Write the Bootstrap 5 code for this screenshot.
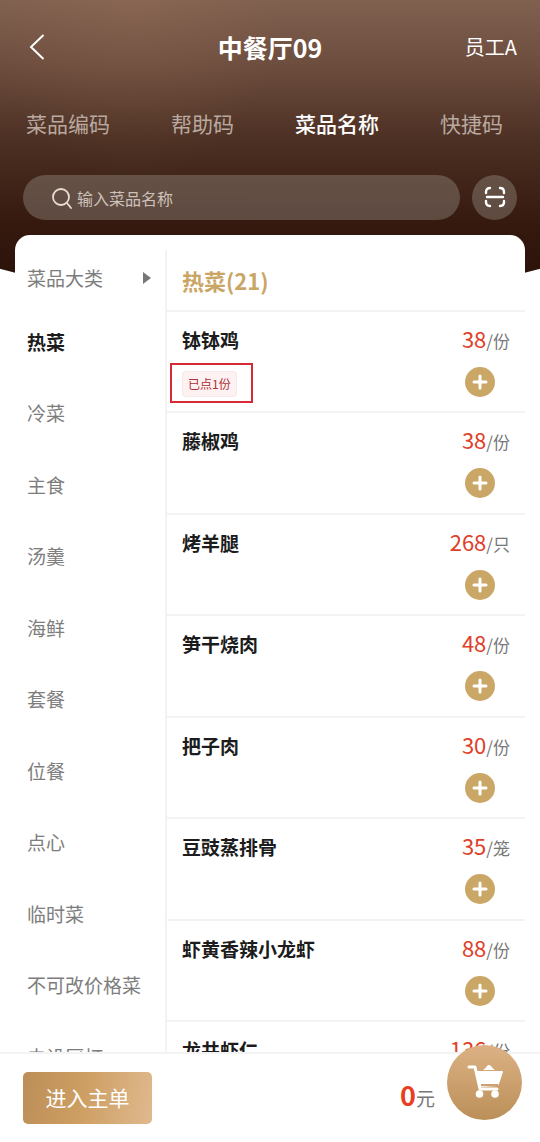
<!DOCTYPE html>
<html lang="zh-CN">
<head>
<meta charset="utf-8">
<meta name="viewport" content="width=device-width, initial-scale=1">
<title>中餐厅09</title>
<link href="https://cdn.jsdelivr.net/npm/bootstrap@5.3.0/dist/css/bootstrap.min.css" rel="stylesheet">
<style>
body{font-family:"Noto Sans CJK SC",sans-serif;color:#1c1c1c;background:#fff}
button,input{font-family:inherit}
.top-area{padding:23px 23px 15px}
.top-area::before{content:"";position:absolute;z-index:-1;top:0;left:-20%;width:140%;height:300px;border-radius:0 0 50% 50%/0 0 104px 104px;
background:radial-gradient(ellipse 150px 180px at 32% 0,rgba(190,140,110,.14),transparent),linear-gradient(#80604f 0,#6d4d3e 65px,#4c3023 140px,#35190f 225px,#2c130a 272px)}
.title-bar{height:48px}
.title-bar h1{font-size:25px;line-height:36px}
.bar-side{flex:1 1 0}
.staff{font-size:20px}
.mode-tabs{margin-top:34px;height:36px;padding:0 14px 0 3px}
.mode-tabs button{font-size:21px;line-height:36px;color:#b9a9a0}
.mode-tabs .active{color:#fff;font-weight:500}
.search-row{margin-top:34px;gap:12px}
.search-pill{height:45px;border-radius:24px;background:rgba(150,140,130,.42);padding-left:28px}
.search-pill input{font-size:16px;color:#fff;outline:0;margin:0 16px 0 2px}
.search-pill input::placeholder{color:#cdc2bb;opacity:1}
.scan{width:45px;height:45px;background:rgba(150,140,130,.42)}
.sheet{margin:0 15px;border-radius:15px 15px 0 0;min-height:0}
.side{width:152px;margin-top:15px;border-right:2px solid #f3f3f3;color:#7d7d7d;font-size:19px}
.side button{font-size:19px;line-height:28px;padding:0 0 0 12px;color:#7d7d7d;height:71px}
.side button:nth-of-type(even){height:72px}
.side .kind{height:56px;padding:0 14px 0 12px}
.side .active{color:#1c1c1c;font-weight:700}
.group-name{height:77px;padding:29px 0 0 15px;font-size:22px;line-height:32px;font-weight:700;color:#c9a566;border-bottom:2px solid #f3f3f3}
.dish{height:101px;border-bottom:2px solid #f3f3f3;padding:12px 15px 0}
.dish:nth-of-type(even){height:102px}
.dish h3{font-size:19px;line-height:32px;font-weight:700}
.price{font-size:17px;line-height:28px;color:#777}
.price b{font-size:22px;font-weight:400;color:#de4128}
.add{width:30px;height:30px;background:#cba767;margin:12px 15px 0 0}
.mark-box{border:2px solid #d62b36;padding:6px 14px 0 10px;margin:7px 0 0 -12px;height:40px}
.ordered{font-size:12px;line-height:24px;height:26px;padding:0 5px;border:1px solid #f9e6e7;border-radius:4px;background:#fdf1f1;color:#ae3037}
.foot{height:90px;border-top:2px solid #f3f3f3;padding:0 18px 0 23px}
.order-btn{width:129px;height:52px;border-radius:5px;font-size:21px;color:#fff;background:linear-gradient(100deg,#bc8f59,#cd9e62 45%,#dfb98e)}
.total{font-size:19px;line-height:32px;color:#777;margin:0 12px 4px 0}
.total b{font-size:27px;font-weight:700;color:#e8401f}
.cart{width:75px;height:75px;background:linear-gradient(#dcb285,#bb8f58);margin-top:-32px}
</style>
</head>
<body>
<div class="vh-100 d-flex flex-column overflow-hidden position-relative z-0">
<header class="top-area">
 <div class="title-bar d-flex align-items-center">
  <div class="bar-side"><button class="btn p-0 ps-1 border-0 d-flex" aria-label="返回"><svg width="20" height="28" viewBox="0 0 20 28" fill="none" stroke="#fff" stroke-width="2"><path d="M16.500 2 4 14l12.500 12"/></svg></button></div>
  <h1 class="m-0 fw-bold text-white">中餐厅09</h1>
  <div class="bar-side staff text-end text-white">员工A</div>
 </div>
 <nav class="mode-tabs d-flex justify-content-between">
  <button class="btn p-0 border-0">菜品编码</button><button class="btn p-0 border-0">帮助码</button><button class="btn p-0 border-0 active">菜品名称</button><button class="btn p-0 border-0">快捷码</button>
 </nav>
 <div class="search-row d-flex">
  <label class="search-pill d-flex flex-grow-1 align-items-center">
   <svg class="flex-shrink-0" width="24" height="24" viewBox="0 0 24 24" fill="none" stroke="#e9ddd5" stroke-width="1.8" stroke-linecap="round"><circle cx="10" cy="11" r="8"/><path d="m16 17 4 5"/></svg>
   <input class="border-0 bg-transparent p-0 w-100" type="text" placeholder="输入菜品名称" aria-label="输入菜品名称">
  </label>
  <button class="scan btn p-0 border-0 rounded-circle d-flex align-items-center justify-content-center" aria-label="扫码"><svg width="24" height="24" viewBox="0 0 24 24" fill="none" stroke="#fff" stroke-width="2.4" stroke-linecap="round"><path d="M3 7V6q0-4 4-4M17 2q4 0 4 4v1M21 15v1q0 4-4 4M7 20q-4 0-4-4v-1M4 11h16"/></svg></button>
 </div>
</header>
<main class="sheet bg-white d-flex flex-grow-1 overflow-hidden">
 <nav class="side flex-shrink-0 d-flex flex-column">
  <div class="kind d-flex flex-shrink-0 align-items-center justify-content-between"><span>菜品大类</span><svg width="8" height="12" viewBox="0 0 8 12" fill="#777"><path d="M0 0 8 6 0 12z"/></svg></div>
  <button class="btn border-0 flex-shrink-0 text-start active">热菜</button>
  <button class="btn border-0 flex-shrink-0 text-start">冷菜</button>
  <button class="btn border-0 flex-shrink-0 text-start">主食</button>
  <button class="btn border-0 flex-shrink-0 text-start">汤羹</button>
  <button class="btn border-0 flex-shrink-0 text-start">海鲜</button>
  <button class="btn border-0 flex-shrink-0 text-start">套餐</button>
  <button class="btn border-0 flex-shrink-0 text-start">位餐</button>
  <button class="btn border-0 flex-shrink-0 text-start">点心</button>
  <button class="btn border-0 flex-shrink-0 text-start">临时菜</button>
  <button class="btn border-0 flex-shrink-0 text-start">不可改价格菜</button>
  <button class="btn border-0 flex-shrink-0 text-start">未设厨打</button>
 </nav>
 <section class="flex-grow-1">
  <h2 class="group-name m-0">热菜(21)</h2>
  <article class="dish d-flex justify-content-between"><div><h3 class="m-0">钵钵鸡</h3><div class="mark-box"><div class="ordered">已点1份</div></div></div><div class="d-flex flex-column align-items-end"><div class="price"><b>38</b>/份</div><button class="add btn p-0 border-0 rounded-circle d-flex align-items-center justify-content-center" aria-label="添加钵钵鸡"><svg width="16" height="16" viewBox="0 0 16 16" stroke="#fff" stroke-width="3" stroke-linecap="round"><path d="M8 2v12M2 8h12"/></svg></button></div></article>
  <article class="dish d-flex justify-content-between"><h3 class="m-0">藤椒鸡</h3><div class="d-flex flex-column align-items-end"><div class="price"><b>38</b>/份</div><button class="add btn p-0 border-0 rounded-circle d-flex align-items-center justify-content-center" aria-label="添加藤椒鸡"><svg width="16" height="16" viewBox="0 0 16 16" stroke="#fff" stroke-width="3" stroke-linecap="round"><path d="M8 2v12M2 8h12"/></svg></button></div></article>
  <article class="dish d-flex justify-content-between"><h3 class="m-0">烤羊腿</h3><div class="d-flex flex-column align-items-end"><div class="price"><b>268</b>/只</div><button class="add btn p-0 border-0 rounded-circle d-flex align-items-center justify-content-center" aria-label="添加烤羊腿"><svg width="16" height="16" viewBox="0 0 16 16" stroke="#fff" stroke-width="3" stroke-linecap="round"><path d="M8 2v12M2 8h12"/></svg></button></div></article>
  <article class="dish d-flex justify-content-between"><h3 class="m-0">笋干烧肉</h3><div class="d-flex flex-column align-items-end"><div class="price"><b>48</b>/份</div><button class="add btn p-0 border-0 rounded-circle d-flex align-items-center justify-content-center" aria-label="添加笋干烧肉"><svg width="16" height="16" viewBox="0 0 16 16" stroke="#fff" stroke-width="3" stroke-linecap="round"><path d="M8 2v12M2 8h12"/></svg></button></div></article>
  <article class="dish d-flex justify-content-between"><h3 class="m-0">把子肉</h3><div class="d-flex flex-column align-items-end"><div class="price"><b>30</b>/份</div><button class="add btn p-0 border-0 rounded-circle d-flex align-items-center justify-content-center" aria-label="添加把子肉"><svg width="16" height="16" viewBox="0 0 16 16" stroke="#fff" stroke-width="3" stroke-linecap="round"><path d="M8 2v12M2 8h12"/></svg></button></div></article>
  <article class="dish d-flex justify-content-between"><h3 class="m-0">豆豉蒸排骨</h3><div class="d-flex flex-column align-items-end"><div class="price"><b>35</b>/笼</div><button class="add btn p-0 border-0 rounded-circle d-flex align-items-center justify-content-center" aria-label="添加豆豉蒸排骨"><svg width="16" height="16" viewBox="0 0 16 16" stroke="#fff" stroke-width="3" stroke-linecap="round"><path d="M8 2v12M2 8h12"/></svg></button></div></article>
  <article class="dish d-flex justify-content-between"><h3 class="m-0">虾黄香辣小龙虾</h3><div class="d-flex flex-column align-items-end"><div class="price"><b>88</b>/份</div><button class="add btn p-0 border-0 rounded-circle d-flex align-items-center justify-content-center" aria-label="添加虾黄香辣小龙虾"><svg width="16" height="16" viewBox="0 0 16 16" stroke="#fff" stroke-width="3" stroke-linecap="round"><path d="M8 2v12M2 8h12"/></svg></button></div></article>
  <article class="dish d-flex justify-content-between"><h3 class="m-0">龙井虾仁</h3><div class="price"><b>136</b>/份</div></article>
 </section>
</main>
<footer class="foot bg-white d-flex flex-shrink-0 align-items-center">
 <button class="order-btn btn p-0 border-0">进入主单</button>
 <div class="total ms-auto d-flex align-items-baseline"><b>0</b>元</div>
 <button class="cart btn p-0 border-0 rounded-circle d-flex align-items-center justify-content-center" aria-label="购物车"><svg width="38" height="38" viewBox="0 0 38 38"><path d="M3 4h6l5 22h17" fill="none" stroke="#fff" stroke-width="3" stroke-linecap="round" stroke-linejoin="round"/><path d="M10 8h26q1 0 1 1l-4 12q-1 2-2 2l-17 1z" fill="#fff"/><path d="M15 22h17" stroke="#cda273" stroke-width="2"/><path d="M17 7q3-2 4-4 2-2 4 0 1 2 4 4z" fill="#fff"/><circle cx="13.500" cy="31" r="3.800" fill="#fff"/><circle cx="29" cy="31" r="3.800" fill="#fff"/></svg></button>
</footer>
</div>
<script src="https://cdn.jsdelivr.net/npm/bootstrap@5.3.0/dist/js/bootstrap.bundle.min.js"></script>
</body>
</html>
